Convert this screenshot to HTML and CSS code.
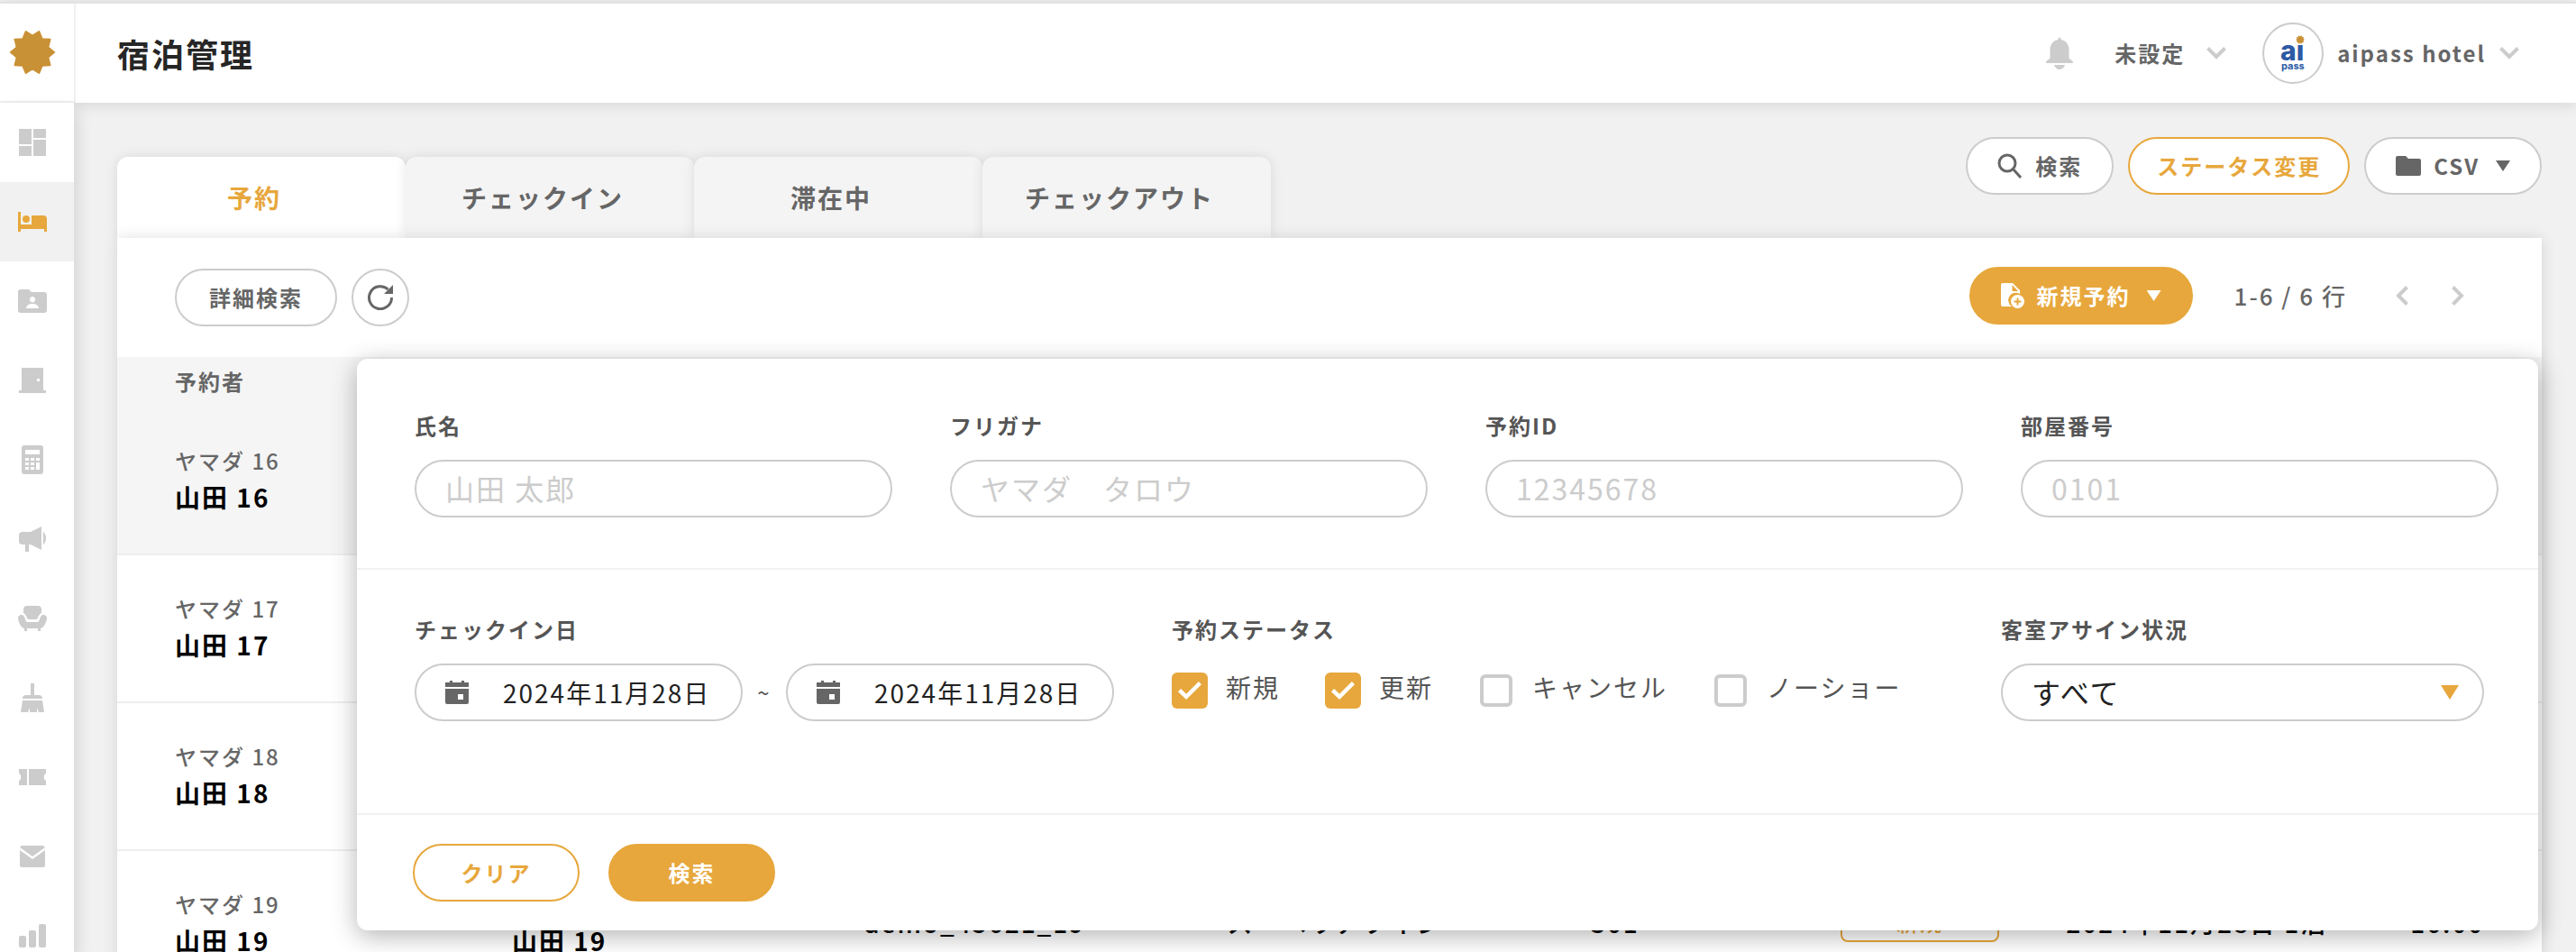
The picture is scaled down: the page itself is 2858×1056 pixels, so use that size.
FILE: index.html
```html
<!DOCTYPE html>
<html lang="ja">
<head>
    <meta charset="UTF-8">
    <meta name="viewport" content="width=device-width, initial-scale=1.0">
    <title>宿泊管理</title>
    <link rel="stylesheet" href="styles.css">
</head>
<body>
    <!-- shared shapes -->
    <svg class="defs" aria-hidden="true">
        <symbol id="sun" viewBox="-26 -26 52 52">
            <path fill="#c99135" stroke="#c99135" stroke-width="1.5" stroke-linejoin="round" d="M24.5 0L17.6 5.7 19.8 14.4 10.9 15 7.5 23.3 0 18.5 -7.5 23.3 -10.9 15 -19.8 14.4 -17.6 5.7 -24.5 0 -17.6 -5.7 -19.8 -14.4 -10.9 -15 -7.5 -23.3 0 -18.5 7.5 -23.3 10.9 -15 19.8 -14.4 17.6 -5.7z"/>
        </symbol>
        <symbol id="calendar" viewBox="0 0 26 26">
            <path d="M0 2h5V0h3v2h10V0h3v2h5v5H0zM0 9h26v15a2 2 0 0 1-2 2H2a2 2 0 0 1-2-2zM14 15v6h6v-6z" fill-rule="evenodd"/>
        </symbol>
    </svg>

    <header class="header">
        <a class="logo" href="#" aria-label="ホーム"><svg width="52" height="52"><use href="#sun"/></svg></a>
        <h1 class="title">宿泊管理</h1>
        <button class="plain bell" aria-label="通知">
            <svg width="30" height="36" viewBox="0 0 30 36"><path d="M13.500 2a1.500 1.500 0 0 1 3 0v1C22 4 25.500 8 25.500 14v9c0 2 4.500 3 4.500 5 0 .6-.5 1-1 1H1c-.5 0-1-.4-1-1 0-2 4.500-3 4.500-5v-9c0-6 3.500-10 9-11zM9 31h12c-1 3-3 5-6 5s-5-2-6-5z"/></svg>
        </button>
        <button class="plain menu">未設定
            <svg class="chevron" width="22" height="14" viewBox="0 0 22 14"><path d="M1.500 1.500L11 11l9.500-9.500"/></svg>
        </button>
        <button class="plain account">
            <span class="avatar">
                <svg width="64" height="64" viewBox="0 0 64 64">
                    <text class="ai" x="18" y="40">ai</text>
                    <text class="pass" x="19" y="50">pass</text>
                    <rect x="35" y="11" width="11" height="12" fill="#fff"/>
                    <use href="#sun" x="35" y="12" width="10" height="10"/>
                </svg>
            </span>
            aipass hotel
            <svg class="chevron" width="22" height="14" viewBox="0 0 22 14"><path d="M1.500 1.500L11 11l9.500-9.500"/></svg>
        </button>
    </header>

    <div class="layout">
        <nav class="sidebar">
            <a href="#" aria-label="ダッシュボード"><svg width="30" height="30" viewBox="0 0 30 30"><path d="M0 0h14v17H0zM16 0h14v10H16zM0 19h14v11H0zM16 12h14v18H16z"/></svg></a>
            <a href="#" class="active" aria-label="宿泊管理"><svg width="32" height="22" viewBox="0 0 32 22"><path d="M0 0h3v14h12V4h13a4 4 0 0 1 4 4v14h-3v-3H3v3H0z"/><circle cx="9" cy="8" r="4"/></svg></a>
            <a href="#" aria-label="顧客"><svg width="32" height="26" viewBox="0 0 32 26"><path fill-rule="evenodd" d="M3 0h9l3 3h14a3 3 0 0 1 3 3v17a3 3 0 0 1-3 3H3a3 3 0 0 1-3-3V3a3 3 0 0 1 3-3zM16 8a3.200 3.200 0 1 0 .1 0zM9 21h14c0-3-3-5-7-5s-7 2-7 5z"/></svg></a>
            <a href="#" aria-label="部屋"><svg width="30" height="28" viewBox="0 0 30 28"><path fill-rule="evenodd" d="M3 0h24v25h3v3H0v-3h3zM20 12v3h3v-3z"/></svg></a>
            <a href="#" aria-label="会計"><svg width="24" height="32" viewBox="0 0 24 32"><path fill-rule="evenodd" d="M3 0h18a3 3 0 0 1 3 3v26a3 3 0 0 1-3 3H3a3 3 0 0 1-3-3V3a3 3 0 0 1 3-3zM4 5v5h16V5zM4 14v3h4v-3zM10 14v3h4v-3zM16 14v3h4v-3zM4 19v3h4v-3zM10 19v3h4v-3zM16 19v8h4v-8zM4 24v3h4v-3zM10 24v3h4v-3z"/></svg></a>
            <a href="#" aria-label="お知らせ"><svg width="30" height="28" viewBox="0 0 30 28"><path d="M4 6h9L25 0v26l-12-6h-2v8H7v-8H4a4 4 0 0 1-4-4v-6a4 4 0 0 1 4-4zM27 6c4 3 4 11 0 14z"/></svg></a>
            <a href="#" aria-label="ロビー"><svg width="32" height="28" viewBox="0 0 32 28"><path d="M10 0h12a4 4 0 0 1 4 4v4c-3 1-4 6-5 7H11c-1-1-2-6-5-7V4a4 4 0 0 1 4-4zM4 10c4 0 4 8 6 8h12c2 0 2-8 6-8 3 0 4 2 4 4s-3 11-7 11v3h-3v-3H10v3H7v-3c-4 0-7-9-7-11s1-4 4-4z"/></svg></a>
            <a href="#" aria-label="清掃"><svg width="26" height="32" viewBox="0 0 26 32"><path d="M11 0h4v13h5a4 4 0 0 1 4 4H2a4 4 0 0 1 4-4h5zM2 19h22l2 13h-6l-2-5v5H10v-5l-2 5H0z"/></svg></a>
            <a href="#" aria-label="クーポン"><svg width="30" height="18" viewBox="0 0 30 18"><path d="M0 0h9v18H0v-5c3-1 3-7 0-8zM11 0h19v5c-3 1-3 7 0 8v5H11z"/></svg></a>
            <a href="#" aria-label="メール"><svg width="28" height="24" viewBox="0 0 28 24"><path d="M2 0h24l2 2-14 10L0 2zM0 5l14 10L28 5v17a2 2 0 0 1-2 2H2a2 2 0 0 1-2-2z"/></svg></a>
            <a href="#" aria-label="レポート"><svg width="30" height="26" viewBox="0 0 30 26"><rect y="13" width="8" height="13" rx="2"/><rect x="11" y="7" width="8" height="19" rx="2"/><rect x="22" width="8" height="26" rx="2"/></svg></a>
        </nav>

        <main class="main">
            <div class="top">
                <div class="tabs">
                    <button class="tab active">予約</button>
                    <button class="tab">チェックイン</button>
                    <button class="tab">滞在中</button>
                    <button class="tab">チェックアウト</button>
                </div>
                <div class="actions">
                    <button class="btn"><svg class="line" width="28" height="28" viewBox="0 0 28 28"><circle cx="11" cy="11" r="9"/><path d="M17 17l9 10"/></svg>検索</button>
                    <button class="btn orange">ステータス変更</button>
                    <button class="btn"><svg width="28" height="22" viewBox="0 0 28 22"><path d="M2 0h9l3 3h12a2 2 0 0 1 2 2v15a2 2 0 0 1-2 2H2a2 2 0 0 1-2-2V2a2 2 0 0 1 2-2z"/></svg>CSV<span class="caret"></span></button>
                </div>
            </div>

            <section class="card">
                <div class="toolbar">
                    <button class="btn detail">詳細検索</button>
                    <button class="btn round" aria-label="更新">
                        <svg width="28" height="28" viewBox="0 0 28 28"><path fill="none" stroke="#666" stroke-width="3" d="M26.500 14a12.500 12.500 0 1 1-4-9"/><path d="M28 0v10H18z"/></svg>
                    </button>
                    <div class="pager">
                        <button class="btn fill"><svg width="26" height="28" viewBox="0 0 26 28"><path fill-rule="evenodd" d="M2 0h11l8 8v4a8 8 0 0 0-9 14H2a2 2 0 0 1-2-2V2a2 2 0 0 1 2-2zM12.500 2v7H19z"/><circle cx="18.500" cy="20.500" r="7.500"/><path stroke="#e7a73c" stroke-width="2" d="M14.500 20.500h8M18.500 16.500v8"/></svg>新規予約<span class="caret"></span></button>
                        <span class="count">1-6 / 6 行</span>
                        <button class="plain" aria-label="前へ"><svg class="chevron" width="14" height="22" viewBox="0 0 14 22"><path d="M12.500 1.500L3 11l9.500 9.500"/></svg></button>
                        <button class="plain next" aria-label="次へ"><svg class="chevron" width="14" height="22" viewBox="0 0 14 22"><path d="M1.500 1.500L11 11l-9.500 9.500"/></svg></button>
                    </div>
                </div>

                <table class="list">
                    <colgroup>
                        <col class="c-guest"><col class="c-stay"><col class="c-id"><col class="c-type"><col class="c-room"><col class="c-status"><col class="c-date"><col>
                    </colgroup>
                    <thead>
                        <tr><th>予約者</th><th colspan="7"></th></tr>
                    </thead>
                    <tbody>
                        <tr class="selected"><td><span class="kana">ヤマダ 16</span><b>山田 16</b></td><td colspan="7"></td></tr>
                        <tr><td><span class="kana">ヤマダ 17</span><b>山田 17</b></td><td colspan="7"></td></tr>
                        <tr><td><span class="kana">ヤマダ 18</span><b>山田 18</b></td><td colspan="7"></td></tr>
                        <tr>
                            <td><span class="kana">ヤマダ 19</span><b>山田 19</b></td>
                            <td><span class="kana">ヤマダ 19</span><b>山田 19</b></td>
                            <td>demo_45621_19</td>
                            <td>スーペリアツイン</td>
                            <td>301</td>
                            <td><span class="badge">新規</span></td>
                            <td>2024年11月28日 1泊</td>
                            <td>16:00</td>
                        </tr>
                    </tbody>
                </table>

                <!-- detail search panel -->
                <form class="panel">
                    <div class="names">
                        <div class="field"><label for="name">氏名</label><input id="name" type="text" placeholder="山田 太郎"></div>
                        <div class="field"><label for="furigana">フリガナ</label><input id="furigana" type="text" placeholder="ヤマダ　タロウ"></div>
                        <div class="field"><label for="rid">予約ID</label><input id="rid" type="text" placeholder="12345678"></div>
                        <div class="field"><label for="room">部屋番号</label><input id="room" type="text" placeholder="0101"></div>
                    </div>
                    <div class="filters">
                        <div class="field">
                            <label for="from">チェックイン日</label>
                            <div class="range">
                                <div class="date"><svg width="26" height="26"><use href="#calendar"/></svg><input id="from" type="text" value="2024年11月28日"></div>
                                <span>~</span>
                                <div class="date"><svg width="26" height="26"><use href="#calendar"/></svg><input type="text" value="2024年11月28日" aria-label="チェックイン日（終了）"></div>
                            </div>
                        </div>
                        <fieldset class="field status">
                            <legend>予約ステータス</legend>
                            <div class="checks">
                                <label><input type="checkbox" checked>新規</label>
                                <label><input type="checkbox" checked>更新</label>
                                <label><input type="checkbox">キャンセル</label>
                                <label><input type="checkbox">ノーショー</label>
                            </div>
                        </fieldset>
                        <div class="field assign">
                            <label for="assign">客室アサイン状況</label>
                            <div class="select">
                                <select id="assign"><option>すべて</option></select>
                                <span class="caret"></span>
                            </div>
                        </div>
                    </div>
                    <div class="foot">
                        <button type="reset" class="btn orange">クリア</button>
                        <button type="button" class="btn fill">検索</button>
                    </div>
                </form>
            </section>
        </main>
    </div>
</body>
</html>
```
FILE: styles.css
```css
*{
    box-sizing: border-box;
}
html{
    background-color: white;
}
body{
    margin: 0;
    height: 100vh;
    overflow: hidden;
    display: flex;
    flex-direction: column;
    background-color: #f1f1f1;
    color: #666;
    font-family: "Noto Sans CJK JP", sans-serif;
    font-size: 24px;
    line-height: 40px;
    letter-spacing: 2px;
}
button, input, select{
    font: inherit;
    letter-spacing: inherit;
    color: inherit;
    margin: 0;
}
button{
    cursor: pointer;
    white-space: nowrap;
}
svg{
    display: block;
    flex: none;
    fill: currentColor;
}
.defs{
    position: absolute;
    width: 0;
    height: 0;
}

/* header */
.header{
    position: relative;
    z-index: 2;
    flex: none;
    display: flex;
    align-items: center;
    height: 112px;
    margin-top: 2px;
    border-top: 2px solid #e2e2e2;
    padding-right: 63px;
    background-color: white;
    box-shadow: 0 2px 16px rgba(0,0,0,0.12);
}
.logo{
    align-self: stretch;
    width: 84px;
    border-right: 2px solid #f1f1f1;
    border-bottom: 2px solid #eee;
    padding: 0 0 0 10px;
    display: flex;
    align-items: center;
}
.title{
    margin: 0 auto 0 46px;
    font-size: 36px;
    font-weight: bold;
    color: #262626;
}
.plain{
    display: flex;
    align-items: center;
    border: none;
    padding: 0;
    background: none;
    font-weight: bold;
}
.bell{
    color: #ccc;
    margin-right: 46px;
}
.menu{
    gap: 24px;
    margin-right: 40px;
}
.account{
    gap: 15px;
}
.chevron{
    fill: none;
    stroke: #ccc;
    stroke-width: 4;
}
.avatar{
    width: 68px;
    height: 68px;
    border: 2px solid #ccc;
    border-radius: 50%;
    background-color: white;
}
.ai{
    font: 800 30px Inter, sans-serif;
    letter-spacing: 0;
    fill: #2c5aa5;
}
.pass{
    font: bold 11px Inter, sans-serif;
    letter-spacing: 0;
    fill: #2c5aa5;
}

.layout{
    flex: 1;
    display: flex;
    min-height: 0;
}
.sidebar{
    flex: none;
    position: relative;
    z-index: 3;
    width: 82px;
    background-color: white;
    box-shadow: 4px 8px 16px rgba(0,0,0,0.12);
}
.sidebar a{
    display: flex;
    align-items: center;
    justify-content: center;
    height: 88px;
    padding-right: 10px;
    color: #ccc;
}
.sidebar a.active{
    background-color: #f1f1f1;
    color: #e7a73c;
}

/* tabs and buttons */
.main{
    flex: 1;
    min-width: 0;
    padding: 38px 38px 0 48px;
}
.top{
    display: flex;
    justify-content: space-between;
    height: 112px;
}
.tabs{
    display: flex;
    align-self: flex-end;
}
.tab{
    width: 320px;
    height: 90px;
    border: none;
    border-radius: 12px 12px 0 0;
    padding: 0 16px 0 0;
    background-color: #f4f4f4;
    box-shadow: 0 0 14px rgba(0,0,0,0.1);
    font-size: 28px;
    font-weight: bold;
}
.tab.active{
    background-color: white;
    color: #e7a73c;
}
.actions{
    display: flex;
    gap: 16px;
}
.btn{
    display: flex;
    align-items: center;
    justify-content: center;
    gap: 14px;
    height: 64px;
    border: 2px solid #ccc;
    border-radius: 32px;
    padding: 0 33px;
    background-color: white;
    color: #666;
    font-weight: bold;
}
.btn.orange{
    border-color: #e7a73c;
    padding: 0 30px;
    color: #e7a73c;
}
.btn.fill{
    border-color: #e7a73c;
    background-color: #e7a73c;
    color: white;
}
.line{
    fill: none;
    stroke: #666;
    stroke-width: 3;
}
.caret{
    width: 16px;
    height: 12px;
    background-color: currentColor;
    clip-path: polygon(0 0, 100% 0, 50% 100%);
}
.btn .caret{
    margin-left: 4px;
}

.card{
    position: relative;
    background-color: white;
    box-shadow: 0 0 16px rgba(0,0,0,0.12);
}
.toolbar{
    position: relative;
    display: flex;
    align-items: center;
    height: 132px;
    padding: 0 86px 0 64px;
    background-color: white;
}
.detail{
    width: 180px;
    margin-right: 16px;
}
.round{
    width: 64px;
    padding: 0;
}
.pager{
    display: flex;
    align-items: center;
    margin-left: auto;
    padding-bottom: 4px;
}
.count{
    margin: 0 54px 0 46px;
    font-size: 26px;
    font-weight: 500;
}
.next{
    margin-left: 48px;
}

/* reservation list */
.list{
    width: 100%;
    table-layout: fixed;
    border-collapse: separate;
    border-spacing: 0;
    font-size: 28px;
    font-weight: 500;
    color: black;
}
.list th{
    height: 56px;
    padding: 0 0 2px 64px;
    background-color: #f5f5f5;
    color: #666;
    font-size: 24px;
    text-align: left;
}
.list td{
    height: 164px;
    padding: 0 0 4px 64px;
    border-bottom: 2px solid #eee;
    white-space: nowrap;
}
.selected td{
    background-color: #f5f5f5;
}
.c-guest{ width: 13.9%; }
.c-stay{ width: 14.5%; }
.c-id{ width: 15%; }
.c-type{ width: 15%; }
.c-room{ width: 10.3%; }
.c-status{ width: 9.3%; }
.c-date{ width: 14.2%; }
.kana{
    display: block;
    font-size: 24px;
    color: #666;
}
.badge{
    display: block;
    width: 176px;
    border: 2px solid #e7a73c;
    border-radius: 8px;
    color: #e7a73c;
    font-size: 24px;
    text-align: center;
}

/* search panel */
.panel{
    position: absolute;
    top: 134px;
    left: 266px;
    right: 4px;
    border-radius: 12px;
    background-color: white;
    box-shadow: 0 6px 28px rgba(0,0,0,0.3);
    color: #555;
}
.names{
    display: grid;
    grid-template-columns: repeat(4, 1fr);
    gap: 64px;
    padding: 56px 44px 56px 64px;
    border-bottom: 2px solid #f1f1f1;
}
.filters{
    display: flex;
    height: 272px;
    padding: 48px 60px 0 64px;
    border-bottom: 2px solid #f1f1f1;
}
.field{
    border: none;
    margin: 0;
    padding: 0;
    min-width: 0;
}
.field > label, .field legend{
    display: block;
    height: 56px;
    padding: 0;
    font-weight: bold;
    line-height: 36px;
}
.names input, .select select, .date{
    width: 100%;
    height: 64px;
    border: 2px solid #ccc;
    border-radius: 32px;
    padding: 0 32px;
    background-color: white;
    font-size: 32px;
}
.names input{
    padding-bottom: 2px;
}
.field input::placeholder{
    color: #ccc;
    opacity: 1;
}
.range{
    display: flex;
    align-items: center;
}
.range > span{
    width: 48px;
    text-align: center;
}
.date{
    display: flex;
    align-items: center;
    gap: 38px;
    width: 364px;
    color: #666;
    font-size: 28px;
}
.date input{
    width: 100%;
    min-width: 0;
    border: none;
    padding: 0;
    background: none;
    color: #222;
}
.status{
    margin-left: 64px;
}
.checks{
    display: flex;
    gap: 50px;
    padding-top: 6px;
    font-size: 28px;
    line-height: 32px;
}
.checks label{
    display: flex;
    align-items: flex-start;
    gap: 20px;
    padding: 4px 0;
}
.checks input{
    appearance: none;
    display: grid;
    place-items: center;
    width: 36px;
    height: 36px;
    margin: 2px;
    border: 4px solid #ccc;
    border-radius: 6px;
}
.checks input:checked{
    width: 40px;
    height: 40px;
    margin: 0;
    border: none;
    background-color: #e7a73c;
}
.checks input:checked::before{
    content: "";
    width: 26px;
    height: 20px;
    background-color: white;
    clip-path: polygon(0 56%, 12% 40%, 35% 69%, 88% 0, 100% 16%, 35% 100%);
}
.assign{
    width: 536px;
    margin-left: auto;
}
.select{
    display: flex;
    align-items: center;
}
.select select{
    appearance: none;
    padding-bottom: 2px;
    color: #222;
}
.select .caret{
    flex: none;
    width: 20px;
    height: 16px;
    margin-left: -48px;
    background-color: #e7a73c;
    pointer-events: none;
}
.foot{
    display: flex;
    gap: 32px;
    padding: 32px 62px;
}
.foot .btn{
    width: 185px;
}
```
